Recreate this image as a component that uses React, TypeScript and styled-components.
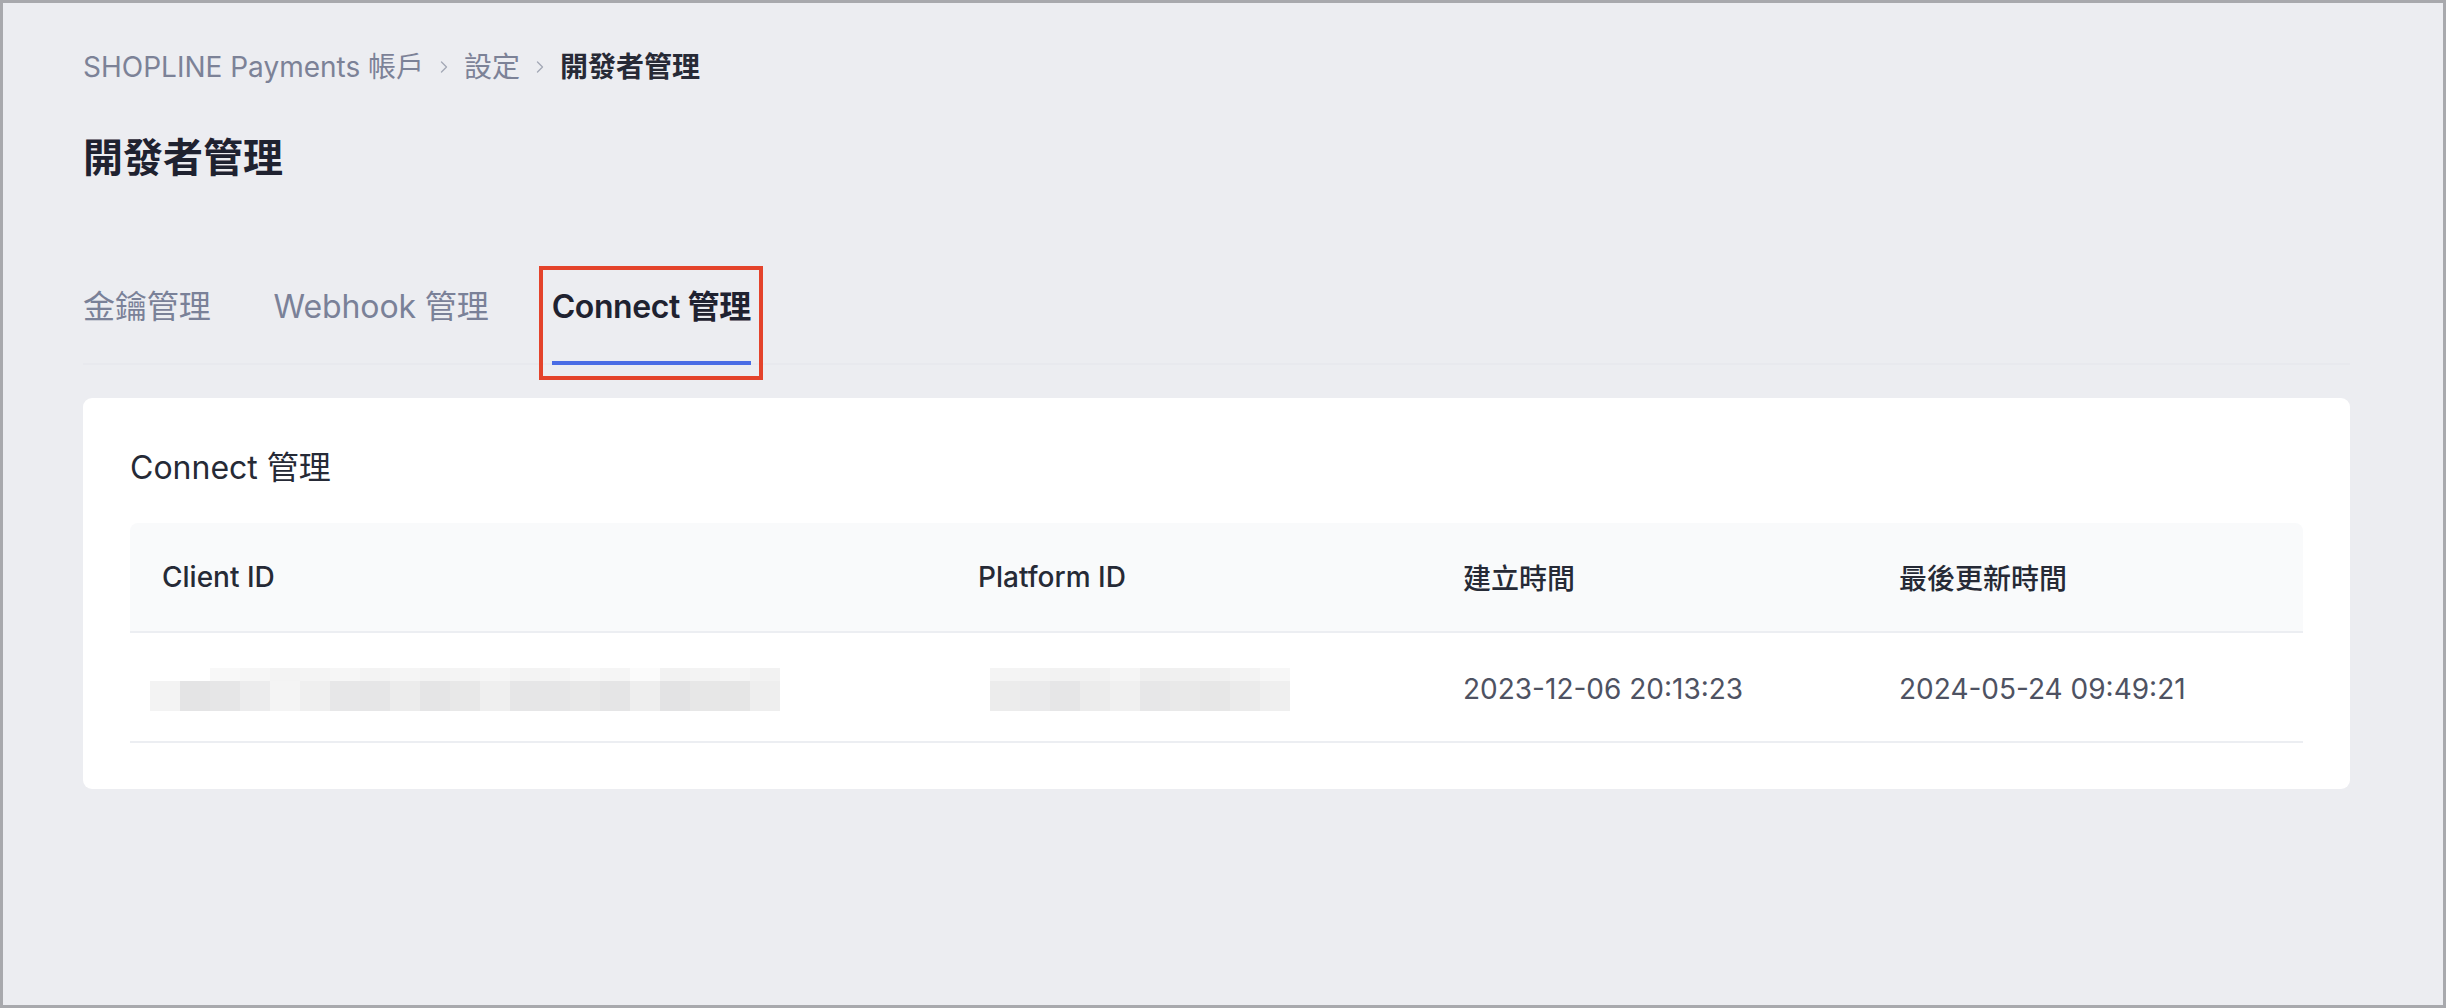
import React from "react";
import styled, { createGlobalStyle } from "styled-components";
import { ChevronRight } from "lucide-react";

const GlobalStyle = createGlobalStyle`
  html, body {
    margin: 0;
    padding: 0;
    background: #ecedf1;
  }
  * { box-sizing: border-box; }
  body {
    font-family: "Inter", "Noto Sans CJK TC", sans-serif;
  }
`;

const Frame = styled.div`
  width: 2446px;
  height: 1008px;
  border: 3px solid #a8a9ad;
  background: #ecedf1;
  padding: 44px 93px 0 80px;
  display: flex;
  flex-direction: column;
`;

const Breadcrumb = styled.nav`
  display: flex;
  align-items: center;
  gap: 10px;
  height: 40px;
  font-size: 28px;
  line-height: 40px;
`;

const Crumb = styled.span<{ $current?: boolean }>`
  color: ${({ $current }) => ($current ? "#272a36" : "#7c8297")};
  font-weight: ${({ $current }) => ($current ? 600 : 400)};
`;

const Sep = styled.span`
  display: flex;
  align-items: center;
  color: #a3a8b6;
`;

const Title = styled.h1`
  margin: 43px 0 0;
  font-size: 40px;
  line-height: 56px;
  font-weight: 600;
  color: #1f2230;
`;

const TabBar = styled.div`
  margin-top: 99px;
  display: flex;
  gap: 63px;
  border-bottom: 2px solid #e8e9ee;
`;

const Tab = styled.div<{ $active?: boolean }>`
  position: relative;
  font-size: 32px;
  line-height: 44px;
  padding-bottom: 32px;
  margin-bottom: -2px;
  letter-spacing: ${({ $active }) => ($active ? "-0.4px" : "-0.1px")};
  color: ${({ $active }) => ($active ? "#1f2230" : "#7a8198")};
  font-weight: ${({ $active }) => ($active ? 600 : 400)};
  border-bottom: 4px solid ${({ $active }) => ($active ? "#4a6de5" : "transparent")};
`;

const Highlight = styled.span`
  position: absolute;
  top: -19px;
  left: -13px;
  right: -12px;
  bottom: -19px;
  border: 4px solid #e4432b;
  pointer-events: none;
`;

const Card = styled.section`
  margin-top: 33px;
  background: #fff;
  border-radius: 9px;
  padding: 48px 47px 46px;
`;

const CardTitle = styled.h2`
  margin: 0 0 33px;
  font-size: 32px;
  line-height: 44px;
  font-weight: 400;
  color: #262a36;
`;

const columns = "816px 485px 436px 1fr";

const HeadRow = styled.div`
  display: grid;
  grid-template-columns: ${columns};
  height: 110px;
  align-items: center;
  background: #f9fafb;
  border-radius: 8px 8px 0 0;
  border-bottom: 2px solid #eceef2;
`;

const Row = styled.div`
  display: grid;
  grid-template-columns: ${columns};
  height: 110px;
  align-items: center;
  border-bottom: 2px solid #eceef2;
`;

const HeadCell = styled.div`
  padding-left: 32px;
  font-size: 28px;
  font-weight: 500;
  color: #262a36;
`;

const Cell = styled.div<{ $pad?: number }>`
  padding-left: ${({ $pad }) => $pad ?? 32}px;
  padding-top: 4px;
  font-size: 28px;
  color: #4e5262;
  display: flex;
`;

const Mosaic = styled.div`
  display: flex;
  flex-direction: column;
`;

const MosaicRow = styled.div<{ $offset: number; $h: number }>`
  display: flex;
  margin-left: ${({ $offset }) => $offset * 30}px;
  height: ${({ $h }) => $h}px;
`;

const Pixel = styled.div<{ $shade: string }>`
  width: 30px;
  height: 100%;
  background: ${({ $shade }) => $shade};
`;

const clientTop = ["#f8f8f8", "#f6f6f6", "#f3f3f3", "#f4f4f4", "#f6f6f6", "#f3f3f3", "#f5f5f5", "#f3f3f3", "#f4f4f4", "#f6f6f6", "#f3f3f3", "#f4f4f4", "#f7f7f7", "#f5f5f5", "#fbfbfb", "#f2f2f2", "#f3f3f3", "#f5f5f5", "#f2f2f2"];
const clientBottom = ["#f3f3f3", "#e4e4e5", "#e6e6e7", "#ececed", "#f4f4f4", "#efefef", "#e7e7e8", "#e6e6e7", "#ececec", "#e5e5e6", "#e8e8e8", "#efefef", "#e6e6e7", "#e6e6e7", "#e8e8e8", "#e5e5e6", "#eeeeee", "#e3e3e4", "#e7e7e7", "#e6e6e6", "#eeeeee"];
const platformTop = ["#f4f4f4", "#f3f3f3", "#f2f2f2", "#f2f2f2", "#f5f5f5", "#efefef", "#f0f0f0", "#f1f1f1", "#f3f3f3", "#f7f7f7"];
const platformBottom = ["#ececec", "#eaeaeb", "#e6e6e7", "#ececec", "#f0f0f0", "#e7e7e8", "#e9e9e9", "#e7e7e7", "#ebebeb", "#efefef"];

const Pixelated = ({ top, bottom, offset }: { top: string[]; bottom: string[]; offset: number }) => (
  <Mosaic>
    <MosaicRow $offset={offset} $h={13}>
      {top.map((c, i) => <Pixel key={i} $shade={c} />)}
    </MosaicRow>
    <MosaicRow $offset={0} $h={30}>
      {bottom.map((c, i) => <Pixel key={i} $shade={c} />)}
    </MosaicRow>
  </Mosaic>
);

export default function App() {
  return (
    <>
      <GlobalStyle />
      <Frame>
        <Breadcrumb>
          <Crumb>SHOPLINE Payments 帳戶</Crumb>
          <Sep><ChevronRight size={20} strokeWidth={1.6} /></Sep>
          <Crumb>設定</Crumb>
          <Sep><ChevronRight size={20} strokeWidth={1.6} /></Sep>
          <Crumb $current>開發者管理</Crumb>
        </Breadcrumb>
        <Title>開發者管理</Title>
        <TabBar>
          <Tab>金鑰管理</Tab>
          <Tab>Webhook 管理</Tab>
          <Tab $active>
            Connect 管理
            <Highlight />
          </Tab>
        </TabBar>
        <Card>
          <CardTitle>Connect 管理</CardTitle>
          <HeadRow>
            <HeadCell>Client ID</HeadCell>
            <HeadCell>Platform ID</HeadCell>
            <HeadCell>建立時間</HeadCell>
            <HeadCell>最後更新時間</HeadCell>
          </HeadRow>
          <Row>
            <Cell $pad={20}><Pixelated top={clientTop} bottom={clientBottom} offset={2} /></Cell>
            <Cell $pad={44}><Pixelated top={platformTop} bottom={platformBottom} offset={0} /></Cell>
            <Cell>2023-12-06 20:13:23</Cell>
            <Cell>2024-05-24 09:49:21</Cell>
          </Row>
        </Card>
      </Frame>
    </>
  );
}
